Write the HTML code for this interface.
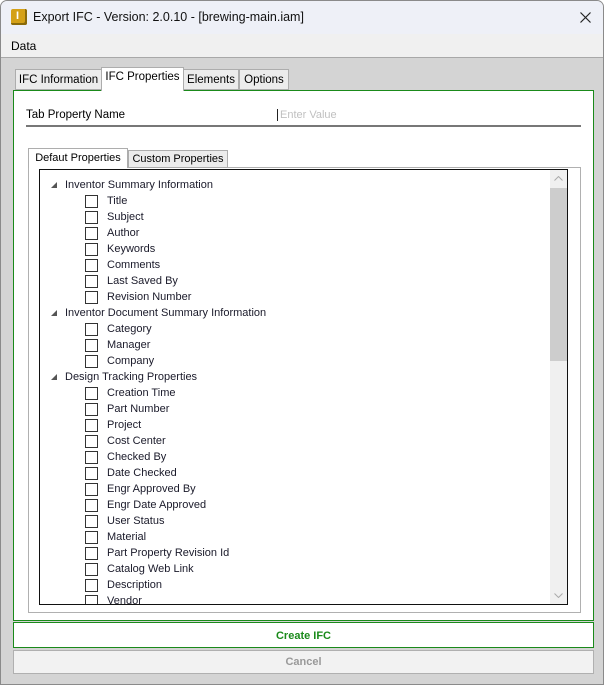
<!DOCTYPE html>
<html><head><style>
*{margin:0;padding:0;box-sizing:border-box}
body{width:606px;height:686px;background:#fff;font-family:"Liberation Sans",sans-serif;font-size:11px;color:#000;position:relative;overflow:hidden}
.win{position:absolute;left:0;top:0;width:604px;height:685px;background:#d4d4d4;border:1px solid #8a8a8a;border-radius:7px 7px 0 0;overflow:hidden}
.title{position:absolute;left:0;top:0;width:100%;height:33px;background:#eef0f7}
.title .ic{position:absolute;left:10px;top:8px;width:16px;height:16px;background:#d4a017;border-radius:2px;box-shadow:inset -2px -2px 0 #8a6a0a}
.title .ic:after{content:"I";position:absolute;left:5px;top:1px;font-size:11px;font-weight:bold;color:#fff}
.title .t{position:absolute;left:32px;top:9px;font-size:12.5px;color:#111}
.title svg{position:absolute;right:12px;top:11px}
.menu{position:absolute;left:0;top:33px;width:100%;height:24px;background:#f0f0f0;border-bottom:1px solid #a8a8a8}
.menu span{position:absolute;left:10px;top:5px;font-size:12px}
.tab{position:absolute;height:21px;border:1px solid #adadad;background:#ececec;font-size:11.5px;padding-top:4px;text-align:center}
.panel{position:absolute;left:12px;top:89px;width:581px;height:531px;background:#fff;border:1px solid #1a8a1a}
.lbl{position:absolute;left:25px;top:108px;font-size:11.5px}
.ph{position:absolute;left:276px;top:108px;font-size:11px;color:#c0c0c0;border-left:1px solid #222;padding-left:2px}
.line{position:absolute;left:25px;top:124px;width:555px;height:2px;background:#777}
.ipanel{position:absolute;left:27px;top:166px;width:553px;height:446px;border:1px solid #b0b0b0;background:#fff}
.tree{position:absolute;left:38px;top:168px;width:529px;height:436px;border:1px solid #111;background:#fff;overflow:hidden}
.sb{position:absolute;right:0;top:0;width:17px;height:100%;background:#f0f0f0}
.thumb{position:absolute;right:0;top:18px;width:17px;height:173px;background:#cdcdcd}
.row{position:absolute;height:16px;font-size:11px;color:#1a1a2a;white-space:nowrap}
.cb{position:absolute;width:13px;height:13px;border:1px solid #333;background:#fff}
.arr{position:absolute;width:0;height:0;border-left:6px solid transparent;border-bottom:6px solid #555}
.btn{position:absolute;left:12px;width:581px;text-align:center;font-weight:bold;font-size:11px}
</style></head><body>
<div class="win">
<div class="title"><div class="ic"></div><div class="t">Export IFC - Version: 2.0.10 - [brewing-main.iam]</div><svg width="11" height="11" viewBox="0 0 11 11"><path d="M0.5 0.5L10.5 10.5M10.5 0.5L0.5 10.5" stroke="#222" stroke-width="1.2"/></svg></div>
<div class="menu"><span>Data</span></div>
<div class="tab" style="left:14px;top:68px;width:87px">IFC Information</div>
<div class="tab" style="left:182px;top:68px;width:56px">Elements</div>
<div class="tab" style="left:238px;top:68px;width:50px">Options</div>
<div class="panel"></div>
<div class="tab" style="left:100px;top:66px;width:83px;height:24px;background:#fff;border-bottom:none;padding-top:3px;z-index:2">IFC Properties</div>
<div class="lbl">Tab Property Name</div>
<div class="ph">Enter Value</div>
<div class="line"></div>
<div class="ipanel"></div>
<div class="tab" style="left:127px;top:149px;width:100px;height:18px;padding-top:2px;font-size:11px">Custom Properties</div>
<div class="tab" style="left:27px;top:147px;width:100px;height:20px;background:#fff;border-bottom:none;padding-top:3px;font-size:11px;z-index:2">Defaut Properties</div>
<div class="tree">
<div class="sb"><div class="thumb"></div><svg style="position:absolute;left:4px;top:6px" width="9" height="5"><path d="M0.5 4.5L4.5 0.5L8.5 4.5" stroke="#aaa" fill="none"/></svg><svg style="position:absolute;left:4px;bottom:6px" width="9" height="5"><path d="M0.5 0.5L4.5 4.5L8.5 0.5" stroke="#aaa" fill="none"/></svg></div>
<div id="rows"></div>
</div>
<div class="btn" style="top:621px;height:26px;background:#fff;border:1px solid #1a8a1a;color:#1a8a1a;padding-top:7px">Create IFC</div>
<div class="btn" style="top:649px;height:24px;background:#f2f2f2;border:1px solid #b0b0b0;color:#999;padding-top:5px">Cancel</div>
</div>
<script>
var items=[[0,"Inventor Summary Information"],[1,"Title"],[1,"Subject"],[1,"Author"],[1,"Keywords"],[1,"Comments"],[1,"Last Saved By"],[1,"Revision Number"],[0,"Inventor Document Summary Information"],[1,"Category"],[1,"Manager"],[1,"Company"],[0,"Design Tracking Properties"],[1,"Creation Time"],[1,"Part Number"],[1,"Project"],[1,"Cost Center"],[1,"Checked By"],[1,"Date Checked"],[1,"Engr Approved By"],[1,"Engr Date Approved"],[1,"User Status"],[1,"Material"],[1,"Part Property Revision Id"],[1,"Catalog Web Link"],[1,"Description"],[1,"Vendor"]];
var h="";items.forEach(function(it,i){var y=8+i*16;
if(it[0]==0){h+='<div class="arr" style="left:11px;top:'+(y+4)+'px"></div><div class="row" style="left:25px;top:'+(y+1)+'px">'+it[1]+'</div>';}
else{h+='<div class="cb" style="left:45px;top:'+(y+1)+'px"></div><div class="row" style="left:67px;top:'+(y+1)+'px">'+it[1]+'</div>';}});
document.getElementById("rows").innerHTML=h;
</script>
</body></html>
